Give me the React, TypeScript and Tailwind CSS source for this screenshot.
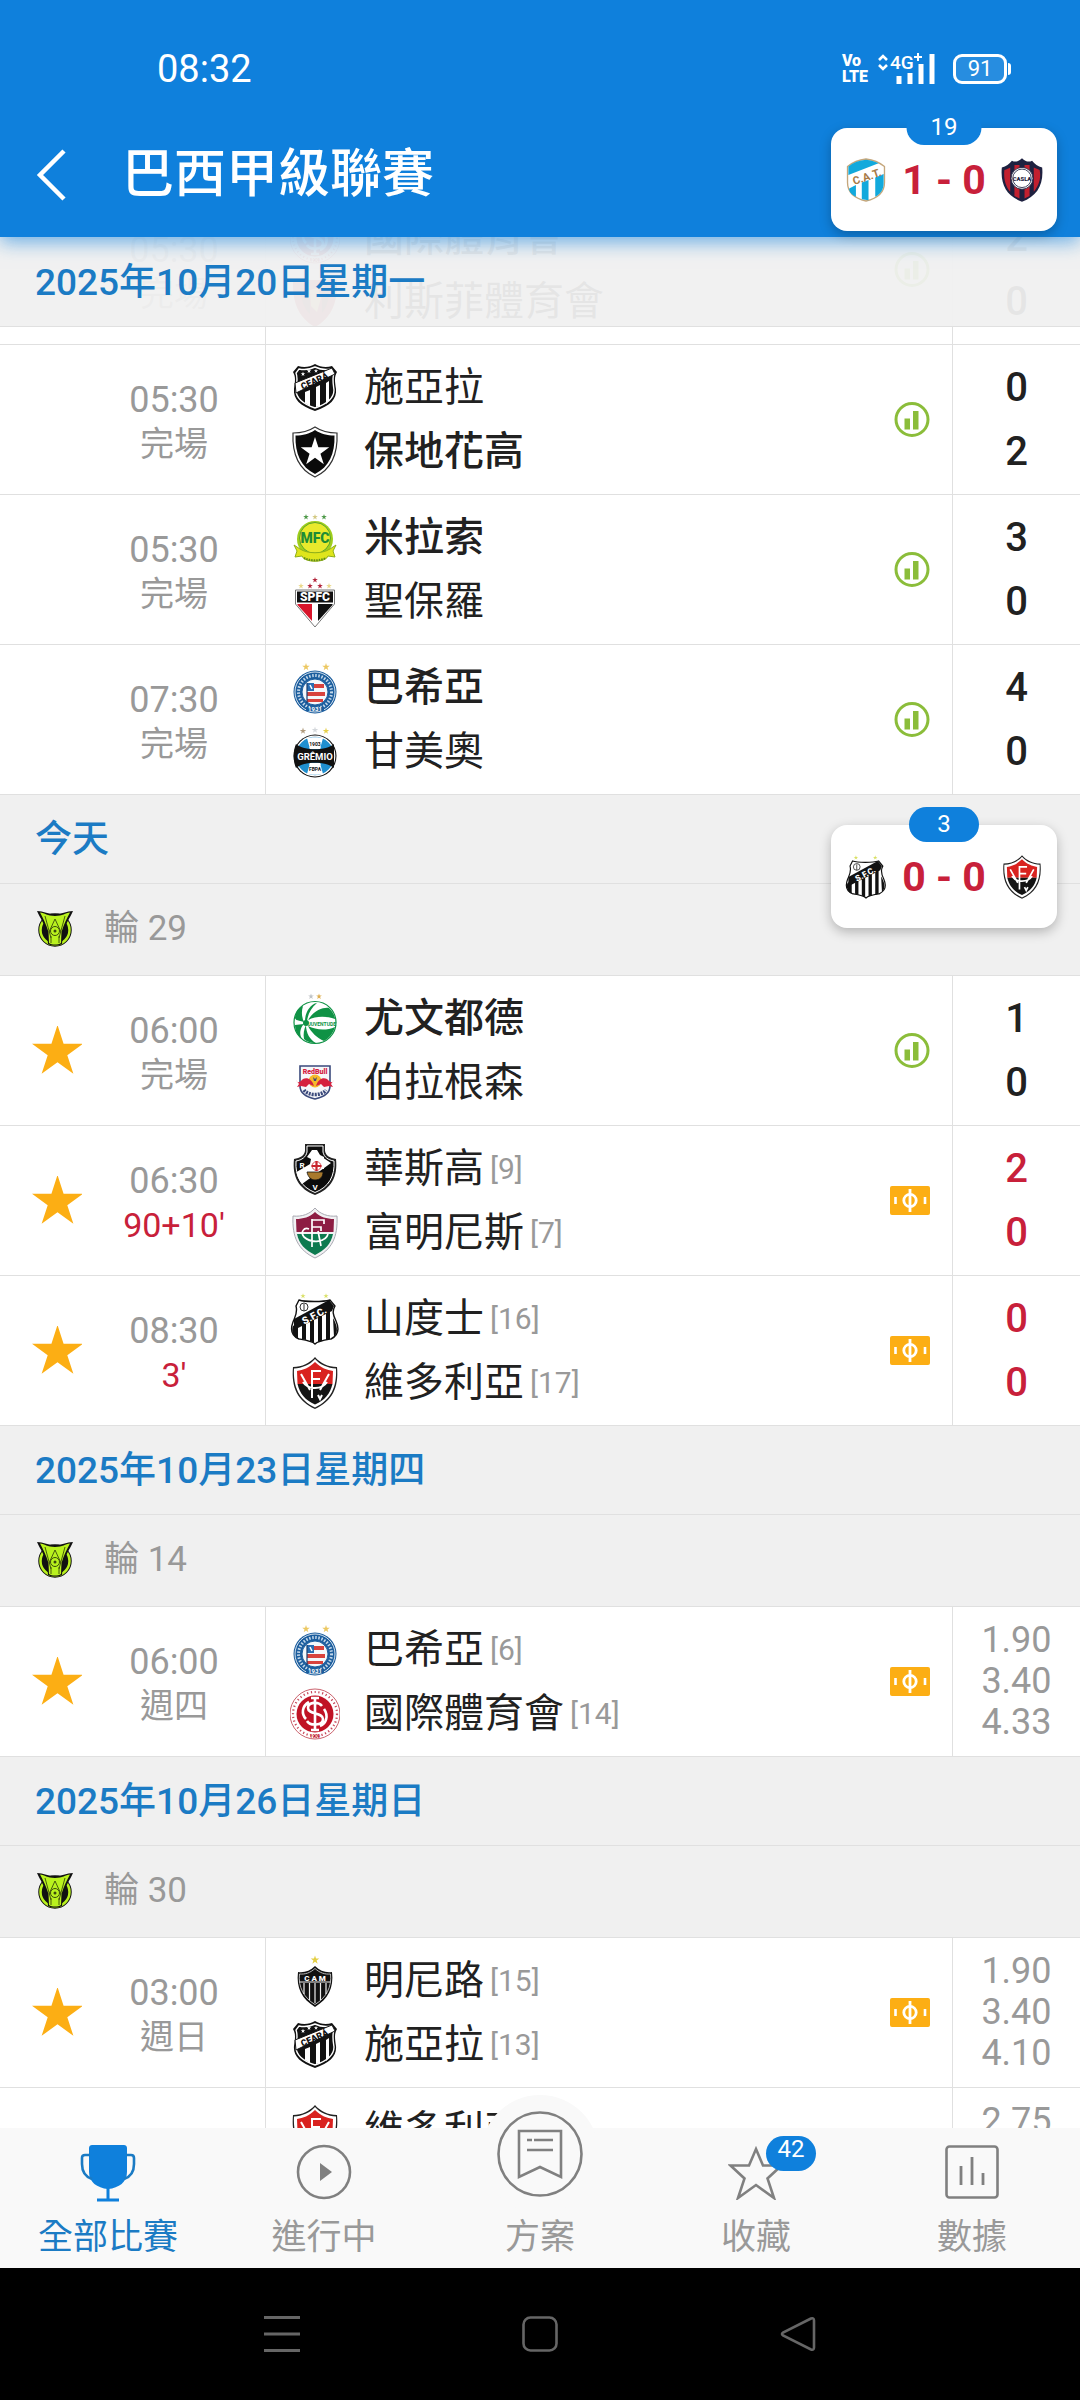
import React from 'react';

const STAR_POINTS = "0,-1 .225,-.309 .951,-.309 .363,.118 .588,.809 0,.382 -.588,.809 -.363,.118 -.951,-.309 -.225,-.309";

const Star: React.FC<{ x: number; y: number; r: number; fill: string }> = ({ x, y, r, fill }) => (
    <polygon points={STAR_POINTS} transform={`translate(${x} ${y}) scale(${r})`} fill={fill} />
);

/* ---------- club crests, all on a 50x52 box ---------- */

const CREST_ART: Record<string, React.ReactNode> = {
    ceara: (
        <>
            <path d="M25 2C30 5 36 6 42 4L47 10C44 15 45 20 46 27C47 37 40 44 25 49C10 44 3 37 4 27C5 20 6 15 3 10L8 4C14 6 20 5 25 2Z" fill="#111" />
            <path d="M25 5C31 8 36 8 41 7L44 11C42 16 43 21 44 28C44 36 37 42 25 46C13 42 6 36 6 28C7 21 8 16 6 11L9 7C14 8 19 8 25 5Z" fill="none" stroke="#fff" strokeWidth="1.4" />
            <path d="M15 30L20 28V44L15 41ZM26 25L30 23V44L26 45ZM36 21L39 19V39L36 42Z" fill="#fff" />
            <path d="M5 21L42 6L45 12L6 31Z" fill="#fff" stroke="#111" strokeWidth="1" />
            <Star x={13} y={12} r={2.4} fill="#fff" />
            <Star x={19} y={9} r={2.4} fill="#fff" />
            <Star x={26} y={9} r={2.2} fill="#fff" />
            <text x="25" y="22" fontSize="9" fontWeight="900" textAnchor="middle" fill="#111" transform="rotate(-24 25 20)">CEARÁ</text>
        </>
    ),
    botafogo: (
        <>
            <path d="M25 1C31 5 39 7 47 7C48 28 42 43 25 51C8 43 2 28 3 7C11 7 19 5 25 1Z" fill="#fff" stroke="#333" strokeWidth="1.2" />
            <path d="M25 4C31 8 37 9.500 44.500 9.500C45 28 39 41 25 48C11 41 5 28 5.500 9.500C13 9.500 19 8 25 4Z" fill="#0a0a0a" />
            <Star x={25} y={26} r={15} fill="#fff" />
        </>
    ),
    mirassol: (
        <>
            <Star x={16} y={5} r={3} fill="#4f9a4a" />
            <Star x={25} y={5} r={3} fill="#d3c983" />
            <Star x={34} y={5} r={3} fill="#4f9a4a" />
            <circle cx="25" cy="27" r="18" fill="#9fce1c" />
            <circle cx="25" cy="26" r="15.500" fill="#e9e92c" stroke="#5aa52b" strokeWidth="1" />
            <text x="25" y="31" fontSize="14" fontWeight="900" textAnchor="middle" fill="#1f8c35">MFC</text>
            <path d="M4 33L10 37C18 42 32 42 40 37L46 33L43 39L45 45L38 44C36 51 14 51 12 44L5 45L7 39Z" fill="#dfe51c" stroke="#8fae1a" strokeWidth="1" />
            <path d="M14 46C20 49 30 49 36 46" fill="none" stroke="#5b8a1c" strokeWidth="2" strokeDasharray="1.5 1" />
        </>
    ),
    saopaulo: (
        <>
            <Star x={25} y={4} r={3} fill="#b3263c" />
            <Star x={11} y={10} r={3} fill="#ead88a" />
            <Star x={20} y={10} r={3} fill="#b3263c" />
            <Star x={30} y={10} r={3} fill="#b3263c" />
            <Star x={39} y={10} r={3} fill="#ead88a" />
            <path d="M5.500 14H44.500V28L25 51L5.500 28Z" fill="#fff" stroke="#777" strokeWidth="1" />
            <rect x="7" y="15.500" width="36" height="11" fill="#111" />
            <text x="25" y="25" fontSize="12" fontWeight="900" textAnchor="middle" fill="#fff">SPFC</text>
            <path d="M7.500 28H22V45L7.500 29Z" fill="#d8152b" />
            <path d="M28 28H42.500V29L28 45Z" fill="#111" />
        </>
    ),
    bahia: (
        <>
            <Star x={16} y={5} r={4} fill="#ecc862" />
            <Star x={36} y={5} r={4} fill="#ecc862" />
            <circle cx="25" cy="30" r="21.500" fill="#1c5e9e" />
            <circle cx="25" cy="30" r="20" fill="none" stroke="#fff" strokeWidth=".8" />
            <circle cx="25" cy="30" r="16.500" fill="none" stroke="#c4d8ea" strokeWidth="3" strokeDasharray="1.500 1.600" />
            <circle cx="25" cy="30" r="13" fill="#f4f8fc" stroke="#1c5e9e" strokeWidth="1" />
            <path d="M17 22H34V26H17ZM17 30H35V34H17ZM17 37H33V40H17Z" fill="#d8433e" />
            <rect x="17" y="21" width="7" height="8" fill="#2a6db2" />
            <path d="M20 23L22 27" stroke="#fff" strokeWidth="1.500" />
            <path d="M17 21V41" stroke="#163e70" strokeWidth="1.200" />
            <path d="M16 47H34" stroke="#1c5e9e" strokeWidth="4" />
            <text x="25" y="49" fontSize="6" fontWeight="700" textAnchor="middle" fill="#fff">1931</text>
        </>
    ),
    gremio: (
        <>
            <Star x={13} y={5} r={3.4} fill="#b09a7c" />
            <Star x={25} y={4} r={3.4} fill="#d4d8dc" />
            <Star x={36} y={5} r={3.4} fill="#e6cf4a" />
            <circle cx="25" cy="30" r="21.500" fill="#111" />
            <circle cx="25" cy="30" r="19.800" fill="#1f8fd0" stroke="#fff" strokeWidth="1.200" />
            <path d="M17 12C20 11 30 11 33 12L30 23H20ZM17 48C20 49 30 49 33 48L30 37H20Z" fill="#fff" />
            <path d="M6 18C14 25 36 25 44 18V42C36 35 14 35 6 42C3 36 3 24 6 18Z" fill="#111" />
            <path d="M19 21C23 23 27 23 31 21L30 23H20ZM19 39C23 37 27 37 31 39L30 37H20Z" fill="#fff" />
            <text x="25" y="33.500" fontSize="9.500" fontWeight="700" textAnchor="middle" fill="#fff">GRÊMIO</text>
            <text x="25" y="20" fontSize="5" fontWeight="700" textAnchor="middle" fill="#111">1903</text>
            <text x="25" y="45" fontSize="5" fontWeight="700" textAnchor="middle" fill="#111">FBPA</text>
        </>
    ),
    juventude: (
        <>
            <Star x={21} y={3.500} r={3} fill="#bfc3c6" />
            <Star x={29} y={3.500} r={3} fill="#dfae4e" />
            <circle cx="25" cy="29.500" r="21" fill="#fff" stroke="#0f9245" strokeWidth="1.200" />
            <path d="M14 29C6 27 5 27 5 24C6 18 9 15 13 13C11 19 12 25 14 29Z" fill="#0f9245" />
            <path d="M15 28C15 20 20 11 27 10C21 15 18 21 17 28Z" fill="#0f9245" />
            <path d="M18 27C24 17 34 14 39 15C43 19 45 23 45 26C36 23 26 23 18 27Z" fill="#0f9245" />
            <path d="M14 31C10 35 9 41 12 46C7 42 5 37 5 32Z" fill="#0f9245" />
            <path d="M16 32C16 40 20 47 26 50C20 50 16 48 14 46C13 41 14 36 16 32Z" fill="#0f9245" />
            <path d="M18 33C26 37 36 38 45 34C43 41 38 46 34 48C27 45 21 39 18 33Z" fill="#0f9245" />
            <circle cx="16" cy="30" r="3" fill="#0f9245" />
            <text x="32" y="32.500" fontSize="5" fontWeight="700" textAnchor="middle" fill="#0f9245">JUVENTUDE</text>
        </>
    ),
    bragantino: (
        <>
            <path d="M10 9H40V29C40 36 34 40 25 42C16 40 10 36 10 29Z" fill="#f6f7fa" stroke="#3b4a7c" strokeWidth="1.600" />
            <text x="25" y="17" fontSize="7" fontWeight="900" textAnchor="middle" fill="#d5213f">RedBull</text>
            <circle cx="25" cy="24" r="6.500" fill="#f6b92a" />
            <path d="M6 23C8 27 10 25 13 22C17 20 22 22 24 29L19 27L16 30L11 29L7 30L9 27ZM44 23C42 27 40 25 37 22C33 20 28 22 26 29L31 27L34 30L39 29L43 30L41 27Z" fill="#d5213f" />
            <path d="M23 20L25 22L27 20L26 24H24Z" fill="#3b4a7c" />
            <path d="M14 33C18 39 32 39 36 33" fill="none" stroke="#3b4a7c" strokeWidth="3.600" strokeDasharray="2 1" />
        </>
    ),
    vasco: (
        <>
            <path d="M15 1H35V8C36 13 40 15 46 16C48 34 41 46 25 52C9 46 2 34 4 16C10 15 14 13 15 8Z" fill="#222" />
            <path d="M17 3H33V9C34 14 38 17 44 18C45 33 39 44 25 49.500C11 44 5 33 6 18C12 17 16 14 17 9Z" fill="#0c0c0c" stroke="#fff" strokeWidth="1" />
            <path d="M32 14L41 20L12 41C8 36 7 31 6.500 29Z" fill="#fff" />
            <path d="M22 7H27L30 12L34 14V26H19L21 16L17 14Z" fill="#fff" />
            <path d="M26.500 18V28M21.500 23H31.500" stroke="#c9242d" strokeWidth="2.200" />
            <circle cx="26.500" cy="23" r="4.400" fill="none" stroke="#c9242d" strokeWidth=".8" />
            <path d="M17 29H33C33 34 30 37 25 37C21 37 18 34 17 29Z" fill="#a8792c" stroke="#111" strokeWidth=".8" />
            <text x="12" y="25" fontSize="8" fontWeight="700" textAnchor="middle" fill="#fff">R</text>
            <text x="25" y="47" fontSize="8" fontWeight="700" textAnchor="middle" fill="#fff">V</text>
        </>
    ),
    fluminense: (
        <>
            <path d="M25 1C30 7 38 10 47 9C48 30 42 43 25 51C8 43 2 30 3 9C12 10 20 7 25 1Z" fill="#f1f1f3" stroke="#a9a9b2" strokeWidth="1" />
            <path d="M25 5C30 10 37 12 44 12L43.500 25H6.500L6 12C13 12 20 10 25 5Z" fill="#8d1d43" />
            <path d="M7 27H43C41 37 35 43 25 48C15 43 9 37 7 27Z" fill="#0d7a4f" />
            <path d="M22 12V40M22 13H34V17M22 20H31V24M38 27C36 35 22 37 14 30C10 25 14 20 19 22M28 24L31 39" fill="none" stroke="#fff" strokeWidth="1.700" />
        </>
    ),
    santos: (
        <>
            <Star x={13} y={3} r={2.8} fill="#d9e065" />
            <Star x={36} y={3} r={2.8} fill="#d9e065" />
            <path d="M9 7C15 9 33 9 40 7L45 13C42 18 43 22 46 28C50 37 47 43 41 46C35 47 28 48 25 51C22 48 15 47 9 46C2 43 0 37 3 29C5 24 8 20 6 13Z" fill="#fff" stroke="#111" strokeWidth="1.400" />
            <path d="M3 33L8 30V46C3 43 1 38 3 33ZM12 29L16 27V47L12 46ZM20 25L24 23V50L20 48ZM28 22L32 19V48L28 49ZM36 18L40 16V46L36 47ZM43 25C47 32 49 39 44 44Z" fill="#111" />
            <path d="M4 26L39 7L44 13L42 18L4 37Z" fill="#111" />
            <text x="24" y="26" fontSize="10" fontWeight="900" textAnchor="middle" fill="#fff" transform="rotate(-28 24 22)">S.F.C.</text>
            <circle cx="14" cy="14" r="4" fill="none" stroke="#333" strokeWidth="1" />
            <path d="M14 11V18" stroke="#333" strokeWidth="1" />
        </>
    ),
    vitoria: (
        <>
            <path d="M25 0C30 6 38 10 47 10C49 31 42 44 25 52C8 44 1 31 3 10C12 10 20 6 25 0Z" fill="#222" />
            <path d="M25 2C30 8 38 11 46 11.500C47 30 41 43 25 50.500C9 43 3 30 4 11.500C12 11 20 8 25 2Z" fill="#fff" />
            <path d="M25 5C31 11 37 13 43 14L42.500 27H7.500L7 14C13 13 19 11 25 5Z" fill="#d9221f" />
            <path d="M7.500 27H42.500C40 37 35 43 25 47.500C15 43 10 37 7.500 27Z" fill="#141414" />
            <path d="M22 41V14H31M22 22H30M11 17L20 33M39 17L30 33M13 25C18 33 32 33 37 25M28 38L30 42L32 38" fill="none" stroke="#fff" strokeWidth="2" />
        </>
    ),
    internacional: (
        <>
            <circle cx="25" cy="26" r="25" fill="#fff" stroke="#c4505c" strokeWidth=".9" />
            <circle cx="25" cy="26" r="22" fill="none" stroke="#c8485a" strokeWidth="2.200" strokeDasharray="1.200 2.600" />
            <circle cx="25" cy="26" r="18.500" fill="#c01325" />
            <path d="M25 10V42M21 10H29M21 42H29M32 18C28 13 18 14 18 20C18 27 33 24 33 31C33 38 20 38 17 33M34 21C39 28 36 36 30 38M16 31C11 26 12 18 19 14" fill="none" stroke="#fff" strokeWidth="2.600" />
            <text x="25" y="50" fontSize="4.500" fontWeight="700" textAnchor="middle" fill="#c01325">1909</text>
        </>
    ),
    mineiro: (
        <>
            <Star x={25} y={5} r={4.500} fill="#e3cf45" />
            <path d="M25 11C30 16 36 18 42 17C44 33 38 44 25 52C12 44 6 33 8 17C14 18 20 16 25 11Z" fill="#111" />
            <path d="M25 13.500C30 18 35 19.500 40.500 19C42 32 36 43 25 49.500C14 43 8 32 9.500 19C15 19.500 20 18 25 13.500Z" fill="none" stroke="#ddd" strokeWidth=".8" />
            <path d="M9.500 27H40.500M14 28V39M19.500 28V45M25 28V48M30.500 28V45M36 28V39" stroke="#eee" strokeWidth="1.200" />
            <text x="25" y="25.500" fontSize="8" fontWeight="900" textAnchor="middle" fill="#fff">C A M</text>
        </>
    ),
    sport: (
        <>
            <path d="M3 4H47C48 25 42 42 25 51C8 42 2 25 3 4Z" fill="#c9444a" />
            <path d="M10 12H20V38C14 33 11 24 10 12ZM32 12H40C39 24 36 33 32 37Z" fill="#7a3a3a" />
            <path d="M20 14L28 12L31 22L27 36L21 30Z" fill="#e8c878" />
        </>
    ),
    tucuman: (
        <>
            <path d="M25 1C34 2 41 5 47 10V29C47 42 38 48 25 51C12 48 3 42 3 29V10C9 5 16 2 25 1Z" fill="#fff" stroke="#c5a77c" strokeWidth="1.600" />
            <path d="M4 20V10C10 5 17 3 25 2C31 2.500 35 4 40 6Z" fill="#12a9dc" />
            <path d="M5 38V36L13 32V46C9 44 6 42 5 38ZM20 29L28 26V50L20 49ZM36 23L46 19V30C46 38 42 43 36 46Z" fill="#12a9dc" />
            <text x="26" y="27" fontSize="13" fontWeight="700" textAnchor="middle" fill="#a87a45" transform="rotate(-19 25 22)">C.A.T.</text>
        </>
    ),
    sanlorenzo: (
        <>
            <path d="M25 0C29 4 33 5 37 3C40 7 44 10 49 11C51 32 43 45 25 52C7 45 -1 32 1 11C6 10 10 7 13 3C17 5 21 4 25 0Z" fill="#1e2140" />
            <path d="M4 14C7 13 9 12 11 11V40C5 33 3 24 4 14ZM16 8H22V48L16 45ZM28 8H34V45L28 48ZM39 11L46 14C48 24 45 33 39 40Z" fill="#c2202f" />
            <circle cx="25" cy="24" r="13" fill="#fff" stroke="#1e2140" strokeWidth="1" />
            <circle cx="25" cy="24" r="11" fill="none" stroke="#1e2140" strokeWidth="1" />
            <text x="25" y="27" fontSize="7" fontWeight="900" textAnchor="middle" fill="#1e2140">CASLA</text>
        </>
    ),
};

const Crest: React.FC<{ club: string; className: string }> = ({ club, className }) => (
    <svg viewBox="0 0 50 52" className={className} aria-hidden="true">{CREST_ART[club]}</svg>
);

const LeagueLogo = () => (
    <svg viewBox="0 0 38 37" className="w-[38px] h-[37px] shrink-0" aria-hidden="true">
        <circle cx="19" cy="20" r="16" fill="#111" stroke="#111" strokeWidth="1.500" />
        <circle cx="19" cy="20" r="14.500" fill="none" stroke="#b9f21e" strokeWidth="2.500" />
        <path d="M1 1C8 1 10 4 19 4C28 4 30 1 37 1C34 8 30 13 27 22L26 34C22 36 16 36 12 34L11 22C8 13 4 8 1 1Z" fill="#111" />
        <path d="M4 2.500C9 3 11 6 19 6C27 6 29 3 34 2.500C31 8 28 14 25.500 22L25 33C22 35 16 35 13 33L12.500 22C10 14 7 8 4 2.500Z" fill="#b9f21e" />
        <path d="M9 6L15 28M29 6L23 28M19 9L13 22M19 9L25 22M15 33V26M23 33V26" fill="none" stroke="#3a4a0c" strokeWidth=".9" />
        <circle cx="19" cy="21" r="4.500" fill="none" stroke="#3a4a0c" strokeWidth="1" />
        <circle cx="19" cy="21" r="1.500" fill="#3a4a0c" />
    </svg>
);

/* ---------- match list ---------- */

interface Team {
    club: string;
    name: string;
    rank?: number;
    winner?: boolean;
}

interface Match {
    time?: string;
    status?: string;
    live?: boolean;
    starred?: boolean;
    teams: Team[];
    extra?: 'stats' | 'odds';
    scores?: number[];
    odds?: string[];
}

interface Day {
    title?: string;
    round?: number;
    matches: Match[];
}

const DAYS: Day[] = [
    {
        matches: [
            { time: '05:30', status: '完場', extra: 'stats', scores: [2, 0], teams: [{ club: 'internacional', name: '國際體育會', winner: true }, { club: 'sport', name: '利斯菲體育會' }] },
            { time: '05:30', status: '完場', extra: 'stats', scores: [0, 2], teams: [{ club: 'ceara', name: '施亞拉' }, { club: 'botafogo', name: '保地花高', winner: true }] },
            { time: '05:30', status: '完場', extra: 'stats', scores: [3, 0], teams: [{ club: 'mirassol', name: '米拉索', winner: true }, { club: 'saopaulo', name: '聖保羅' }] },
            { time: '07:30', status: '完場', extra: 'stats', scores: [4, 0], teams: [{ club: 'bahia', name: '巴希亞', winner: true }, { club: 'gremio', name: '甘美奧' }] },
        ],
    },
    {
        title: '今天',
        round: 29,
        matches: [
            { time: '06:00', status: '完場', starred: true, extra: 'stats', scores: [1, 0], teams: [{ club: 'juventude', name: '尤文都德', winner: true }, { club: 'bragantino', name: '伯拉根森' }] },
            { time: '06:30', status: "90+10'", live: true, starred: true, extra: 'odds', scores: [2, 0], teams: [{ club: 'vasco', name: '華斯高', rank: 9 }, { club: 'fluminense', name: '富明尼斯', rank: 7 }] },
            { time: '08:30', status: "3'", live: true, starred: true, extra: 'odds', scores: [0, 0], teams: [{ club: 'santos', name: '山度士', rank: 16 }, { club: 'vitoria', name: '維多利亞', rank: 17 }] },
        ],
    },
    {
        title: '2025年10月23日星期四',
        round: 14,
        matches: [
            { time: '06:00', status: '週四', starred: true, extra: 'odds', odds: ['1.90', '3.40', '4.33'], teams: [{ club: 'bahia', name: '巴希亞', rank: 6 }, { club: 'internacional', name: '國際體育會', rank: 14 }] },
        ],
    },
    {
        title: '2025年10月26日星期日',
        round: 30,
        matches: [
            { time: '03:00', status: '週日', starred: true, extra: 'odds', odds: ['1.90', '3.40', '4.10'], teams: [{ club: 'mineiro', name: '明尼路', rank: 15 }, { club: 'ceara', name: '施亞拉', rank: 13 }] },
            { odds: ['2.75'], teams: [{ club: 'vitoria', name: '維多利亞' }] },
        ],
    },
];

const StatsIcon = () => (
    <svg viewBox="0 0 36 36" className="size-9" aria-hidden="true">
        <circle cx="18" cy="17.500" r="16" fill="none" stroke="#8bbd3a" strokeWidth="3" />
        <rect x="10.500" y="16.500" width="5.500" height="11" fill="#8bbd3a" />
        <rect x="19" y="9" width="5.500" height="18.500" fill="#8bbd3a" />
    </svg>
);

const OddsIcon = () => (
    <svg viewBox="0 0 40 30" className="w-10 h-[30px]" aria-hidden="true">
        <rect width="40" height="29" rx="2" fill="#fcae14" />
        <circle cx="20" cy="14.500" r="6.200" fill="none" stroke="#fff" strokeWidth="2.800" />
        <path d="M20 3V26" stroke="#fff" strokeWidth="2.800" />
        <path d="M5.500 11V18M35 11V18" stroke="#fff" strokeWidth="2.600" />
    </svg>
);

const MatchRow: React.FC<{ match: Match }> = ({ match }) => (
    <li className="flex h-[150px] border-t border-[#e0e0e0] bg-white">
        <div className="w-[266px] shrink-0 flex border-r border-[#e0e0e0]">
            <div className="w-[83px] pl-8 flex items-center">
                {match.starred && (
                    <button aria-label="收藏">
                        <svg viewBox="0 0 50 50" className="size-[50px]"><Star x={25.5} y={26} r={27} fill="#fcae14" /></svg>
                    </button>
                )}
            </div>
            <div className="flex-1 pt-[33px] text-center text-[#999999]">
                <p className="text-[36px] leading-[44px]">{match.time}</p>
                <p className={`text-[34px] leading-[44px] ${match.live ? 'text-[#c8203a]' : ''}`}>{match.status}</p>
            </div>
        </div>

        <div className="flex-1 min-w-0 pl-6 pt-[11px]">
            {match.teams.map(team => (
                <div key={team.club} className="flex items-center h-16">
                    <Crest club={team.club} className="w-[50px] h-[52px] shrink-0" />
                    <span className={`ml-6 text-[40px] leading-[48px] text-[#212121] whitespace-nowrap ${team.winner ? 'font-medium' : ''}`}>
                        {team.name}
                    </span>
                    {team.rank && <span className="ml-[6px] text-[30px] leading-[48px] text-[#999999]">[{team.rank}]</span>}
                </div>
            ))}
        </div>

        <div className="pr-[22px] flex items-center">
            {match.extra === 'stats' && <StatsIcon />}
            {match.extra === 'odds' && <OddsIcon />}
        </div>

        <div className="w-32 shrink-0 border-l border-[#e0e0e0] text-center">
            {match.scores && (
                <div className={`pt-[11px] text-[40px] leading-[64px] font-medium ${match.live ? 'text-[#c8203a]' : 'text-[#212121]'}`}>
                    {match.scores.map((score, i) => <p key={i}>{score}</p>)}
                </div>
            )}
            {match.odds && (
                <div className="pt-[13px] text-[36px] leading-[41px] text-[#999999]">
                    {match.odds.map(odd => <p key={odd}>{odd}</p>)}
                </div>
            )}
        </div>
    </li>
);

interface ScoreCardProps {
    minute: number;
    home: string;
    away: string;
    score: string;
    className: string;
}

const ScoreCard: React.FC<ScoreCardProps> = ({ minute, home, away, score, className }) => (
    <div className={`absolute right-[23px] z-10 w-[226px] h-[103px] px-[14px] flex items-center justify-between rounded-2xl bg-white shadow-[0_4px_12px_rgba(0,0,0,0.25)] ${className}`}>
        <span className="absolute -top-[18px] left-1/2 -translate-x-1/2 min-w-[70px] h-[35px] px-6 rounded-full bg-[#0f80dc] text-white text-[24px] leading-[35px] text-center">
            {minute}
        </span>
        <Crest club={home} className="w-[42px] h-11" />
        <span className="text-[41px] leading-[48px] font-bold text-[#c8203a] whitespace-nowrap">{score}</span>
        <Crest club={away} className="w-[42px] h-11" />
    </div>
);

const DAY_TITLE = "h-[89px] pt-[2px] pl-[35px] flex items-center text-[37px] leading-[48px] font-medium text-[#1b7bc4]";

const DaySection: React.FC<{ day: Day }> = ({ day }) => (
    <section>
        {day.title && (
            <div className="relative border-t border-[#e0e0e0] bg-[#f0f0f0]">
                <h2 className={`${DAY_TITLE} -mt-px`}>{day.title}</h2>
                {day.title === '今天' && (
                    <ScoreCard minute={3} home="santos" away="vitoria" score="0 - 0" className="top-[30px]" />
                )}
            </div>
        )}
        {day.round && (
            <div className="h-[92px] pb-[2px] pl-9 flex items-center gap-[30px] border-t border-[#e0e0e0] bg-[#f0f0f0] text-[35px] leading-[48px] text-[#999999]">
                <LeagueLogo />
                <h3>輪 {day.round}</h3>
            </div>
        )}
        <ul>
            {day.matches.map((match, i) => <MatchRow key={i} match={match} />)}
        </ul>
    </section>
);

/* ---------- status bar, header, tabs ---------- */

const StatusBar = () => (
    <div className="h-[110px] pt-7 pl-[157px] pr-[69px] flex items-center justify-between text-white">
        <span className="text-[38px] leading-[44px]">08:32</span>
        <div className="flex items-center">
            <div className="flex flex-col text-[16px] leading-[16px] font-black">
                <span>Vo</span>
                <span>LTE</span>
            </div>
            <svg viewBox="0 0 58 32" className="ml-[10px] w-[58px] h-8" aria-label="4G+">
                <path d="M1 7L5 3L9 7M1 12L5 16L9 12" fill="none" stroke="#fff" strokeWidth="2.600" />
                <text x="12" y="16" fontSize="19" fontWeight="500" fill="#fff">4G</text>
                <path d="M36 4H44M40 0V8" stroke="#fff" strokeWidth="2" />
                <path d="M21 23V31M32 20V31M43 11V31M54 1V31" stroke="#fff" strokeWidth="5" />
            </svg>
            <div className="ml-[17px] w-[54px] h-[30px] rounded-[9px] border-3 border-white bg-white/10 text-[22px] leading-[24px] text-center">91</div>
            <span className="ml-px w-[3px] h-3 rounded-r bg-white" />
        </div>
    </div>
);

const TrophyIcon = () => (
    <svg viewBox="0 0 56 58" className="w-14 h-[58px]" aria-hidden="true">
        <path d="M9 4C9 2 10.500 1 12 1H44C45.500 1 47 2 47 4V28C47 38 39 44 28 45C17 44 9 38 9 28Z" fill="#0f80dc" />
        <path d="M10 11H5C3 11 2 12 2 14V20C2 29 6 33 12 35M46 11H51C53 11 54 12 54 14V20C54 29 50 33 44 35" fill="none" stroke="#1b7bc4" strokeWidth="2.600" />
        <path d="M28 44V56M17 56H39" stroke="#0f80dc" strokeWidth="3" />
    </svg>
);

const PlayIcon = () => (
    <svg viewBox="0 0 56 56" className="size-14" aria-hidden="true">
        <circle cx="28" cy="28" r="26" fill="none" stroke="#808080" strokeWidth="2.600" />
        <path d="M24 19V37L36 28Z" fill="#808080" />
    </svg>
);

const PlanIcon = () => (
    <svg viewBox="0 0 86 86" className="size-[86px]" aria-hidden="true">
        <circle cx="43" cy="43" r="41.500" fill="none" stroke="#808080" strokeWidth="2.600" />
        <path d="M22 20H64V66L43 56L22 66Z" fill="none" stroke="#808080" strokeWidth="2.600" />
        <path d="M30 29H35M37 29H56M30 39H56" stroke="#808080" strokeWidth="2.600" />
    </svg>
);

const StarIcon = () => (
    <svg viewBox="0 0 56 56" className="size-14" aria-hidden="true">
        <path d="M28 5L35 21.500H53.500L39.500 34.500L46 54L28 41L10 54L16.500 34.500L2.500 21.500H21Z" fill="none" stroke="#808080" strokeWidth="2.600" />
    </svg>
);

const DataIcon = () => (
    <svg viewBox="0 0 56 56" className="size-14" aria-hidden="true">
        <rect x="2.500" y="2.500" width="51" height="51" rx="3" fill="none" stroke="#808080" strokeWidth="2.600" />
        <path d="M17 22V41M28 13V41M39 29V41" stroke="#808080" strokeWidth="2.800" />
    </svg>
);

const TABS = [
    { label: '全部比賽', icon: <TrophyIcon />, active: true },
    { label: '進行中', icon: <PlayIcon /> },
    { label: '方案', icon: <PlanIcon />, raised: true },
    { label: '收藏', icon: <StarIcon />, badge: 42 },
    { label: '數據', icon: <DataIcon /> },
];

const TabBar = () => (
    <nav className="relative z-20 grid grid-cols-5 bg-[#f9f9f9]">
        {TABS.map(tab => (
            <button key={tab.label} className="relative pt-4 pb-2 flex flex-col items-center">
                {tab.raised ? (
                    <>
                        <span className="absolute -top-[33px] left-1/2 -translate-x-1/2 size-[118px] rounded-full bg-[#f9f9f9] flex items-center justify-center">
                            {tab.icon}
                        </span>
                        <span className="h-14" />
                    </>
                ) : (
                    <span className="h-14">{tab.icon}</span>
                )}
                {tab.badge && (
                    <span className="absolute top-2 left-[118px] w-[50px] h-[35px] rounded-full bg-[#0f80dc] text-white text-[24px] leading-[27px]">
                        {tab.badge}
                    </span>
                )}
                <span className={`relative mt-4 text-[35px] leading-[44px] ${tab.active ? 'text-[#1b7bc4]' : 'text-[#999999]'}`}>
                    {tab.label}
                </span>
            </button>
        ))}
    </nav>
);

const SystemNav = () => (
    <div className="h-[132px] shrink-0 bg-black flex items-center justify-center gap-[222px]">
        <button aria-label="最近">
            <svg viewBox="0 0 36 36" className="size-9"><path d="M0 1.500H36M0 18H36M0 34.500H36" stroke="#666" strokeWidth="3" /></svg>
        </button>
        <button aria-label="主頁">
            <svg viewBox="0 0 36 36" className="size-9"><rect x="1.500" y="1.500" width="33" height="33" rx="7" fill="none" stroke="#666" strokeWidth="2.600" /></svg>
        </button>
        <button aria-label="返回">
            <svg viewBox="0 0 36 36" className="size-9"><path d="M31 2.500L3 16.500Q1 18 3 19.500L31 33.500Q34 34.500 34 31.500V4.500Q34 1.500 31 2.500Z" fill="none" stroke="#666" strokeWidth="2.600" /></svg>
        </button>
    </div>
);

const App: React.FC = () => {
    return (
        <div lang="zh-Hant" className="h-screen flex flex-col overflow-hidden bg-white font-['Roboto','Noto_Sans_CJK_TC',sans-serif]">
            <header className="relative z-20 shrink-0 bg-[#0f80dc] shadow-[0_5px_18px_rgba(15,128,220,0.6)]">
                <StatusBar />
                <div className="h-[127px] pt-[2px] pl-9 flex items-center text-white">
                    <button aria-label="返回" className="w-[86px]">
                        <svg viewBox="0 0 30 52" className="w-[30px] h-[52px]"><path d="M28 2L4 26L28 50" fill="none" stroke="#fff" strokeWidth="4.500" /></svg>
                    </button>
                    <h1 className="text-[52px] leading-[64px] font-medium">巴西甲級聯賽</h1>
                </div>
                <ScoreCard minute={19} home="tucuman" away="sanlorenzo" score="1 - 0" className="bottom-[6px]" />
            </header>

            <main className="relative flex-1 min-h-0 overflow-hidden">
                {/* current day stays pinned over the scrolled list */}
                <div className="absolute inset-x-0 top-0 z-10 border-b border-[#e0e0e0] bg-[#f0f0f0]/95">
                    <h2 className={DAY_TITLE}>2025年10月20日星期一</h2>
                </div>
                <div className="-mt-[43px]">
                    {DAYS.map((day, i) => <DaySection key={i} day={day} />)}
                </div>
            </main>

            <TabBar />
            <SystemNav />
        </div>
    );
};

export default App;
